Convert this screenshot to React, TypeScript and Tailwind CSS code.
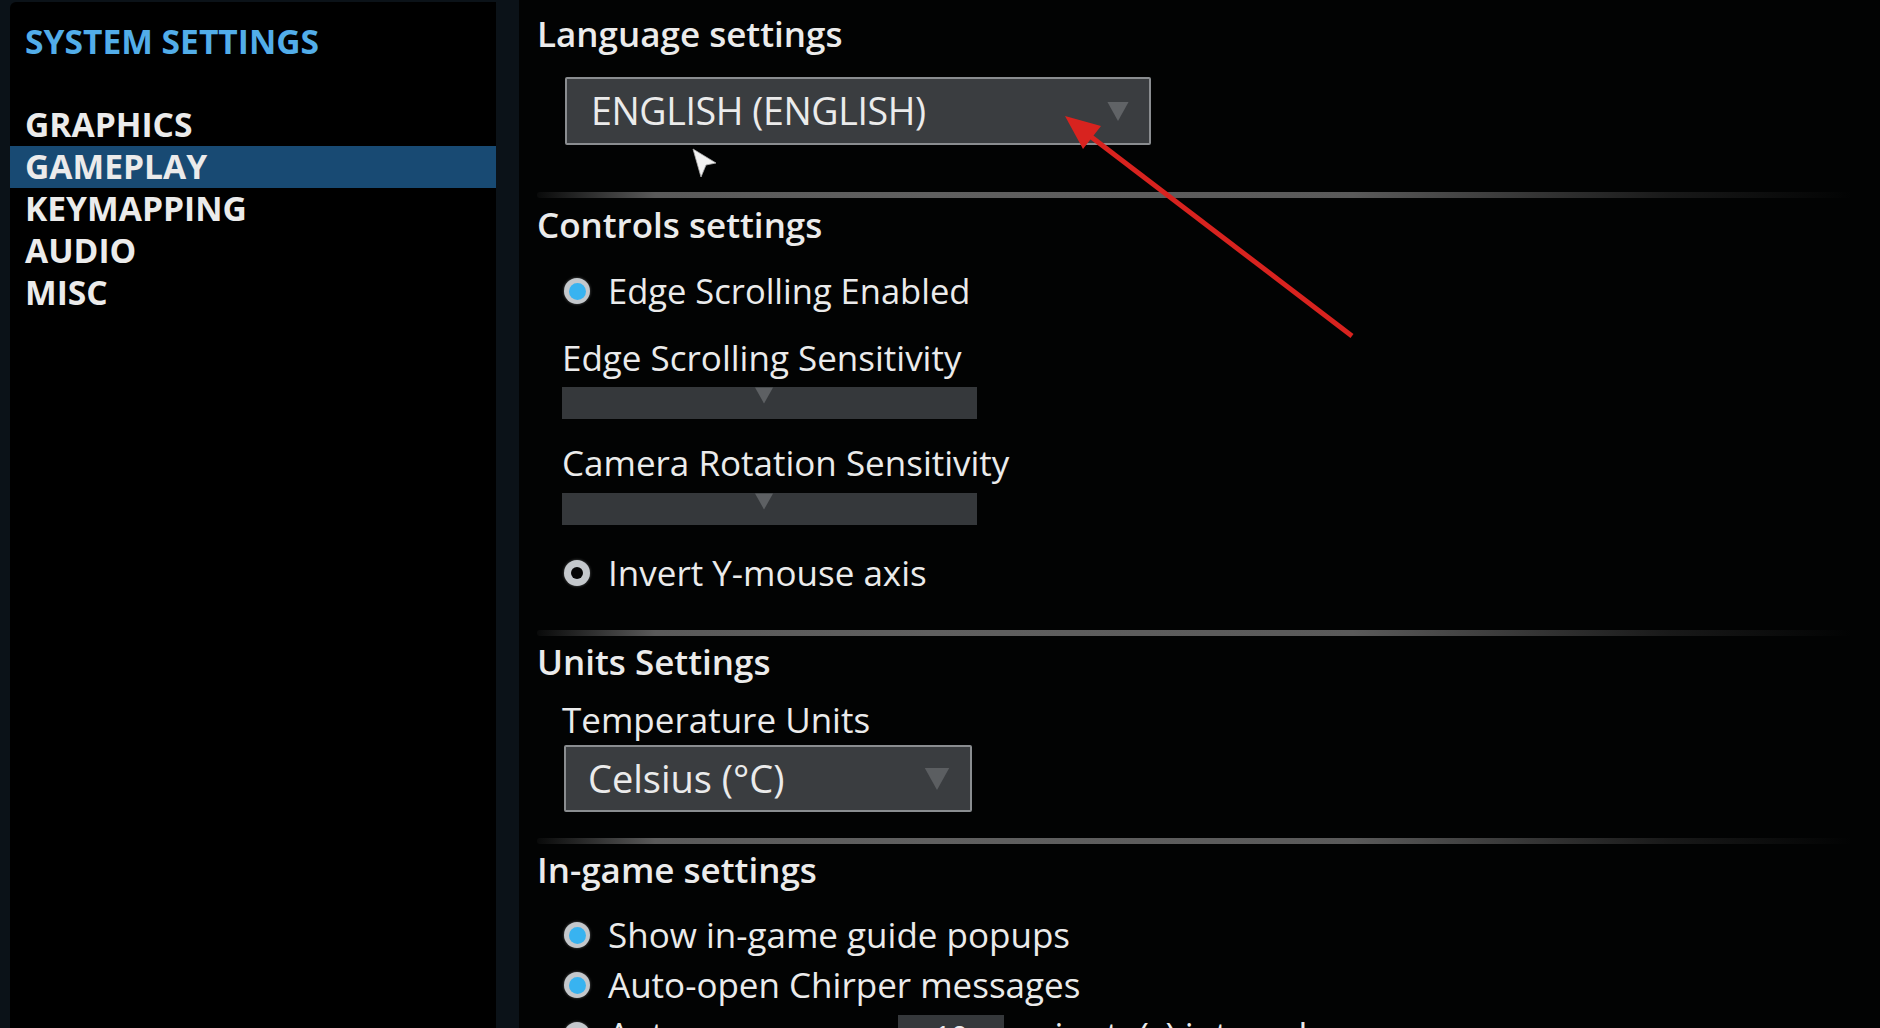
import React from "react";

const menu = ["GRAPHICS", "GAMEPLAY", "KEYMAPPING", "AUDIO", "MISC"];

function Radio({ checked }: { checked: boolean }) {
  return (
    <span className="flex h-[26px] w-[26px] shrink-0 items-center justify-center rounded-full bg-[#c4c8cc] shadow-[0_0_3px_rgba(255,255,255,0.35)]">
      {checked ? (
        <span className="h-[17px] w-[17px] rounded-full bg-[#38b3f0]" />
      ) : (
        <span className="h-[12px] w-[12px] rounded-full bg-[#050505]" />
      )}
    </span>
  );
}

function Caret({ w, h, color }: { w: number; h: number; color: string }) {
  return (
    <svg width={w} height={h} viewBox="0 0 20 18">
      <polygon points="0,0 20,0 10,18" fill={color} />
    </svg>
  );
}

function Separator({ className }: { className: string }) {
  return (
    <div
      className={`h-[6px] mr-[28px] rounded-full bg-[linear-gradient(90deg,rgba(70,70,70,0.1)_0%,#5a5a5a_9%,#606060_30%,#5a5a5a_62%,rgba(40,40,40,0.6)_86%,transparent_100%)] ${className}`}
    />
  );
}

function Slider() {
  return (
    <div className="flex h-[32px] w-[415px] items-start bg-[#35383b] pl-[193px]">
      <Caret w={18} h={17} color="#5d6063" />
    </div>
  );
}

export default function App() {
  return (
    <div className="relative flex h-screen w-full overflow-hidden bg-[#0b1218] font-['Open_Sans','Noto_Sans',sans-serif] text-[#ebebeb]">
      {/* Sidebar */}
      <aside className="ml-[10px] mt-[2px] w-[486px] shrink-0 rounded-tl-[6px] bg-black pt-[19px]">
        <h1 className="flex h-[40px] items-center pl-[15px] text-[33.6px] font-bold text-[#52ade9]">
          SYSTEM SETTINGS
        </h1>
        <ul className="mt-[43px]">
          {menu.map((m) => (
            <li
              key={m}
              className={`flex h-[42px] items-center pl-[15px] text-[33.6px] font-bold leading-none ${
                m === "GAMEPLAY" ? "bg-[#184a73]" : ""
              }`}
            >
              {m}
            </li>
          ))}
        </ul>
      </aside>

      {/* Main */}
      <main className="ml-[23px] flex-1 bg-[#020303] pl-[18px]">
        <h2 className="flex h-[68px] items-center text-[35px] font-semibold">Language settings</h2>
        <div className="ml-[28px] mt-[9px] flex h-[68px] w-[586px] items-center justify-between rounded-[2px] border-2 border-[#8a8d90] bg-[#3a3d40] pl-[24px] pr-[20px]">
          <span className="text-[37.5px] tracking-[-0.01em]">ENGLISH (ENGLISH)</span>
          <Caret w={22} h={19} color="#606366" />
        </div>

        <Separator className="mt-[47px]" />
        <h2 className="flex h-[54px] items-center text-[35px] font-semibold">Controls settings</h2>

        <div className="ml-[27px] flex h-[78px] items-center gap-[18px]">
          <Radio checked />
          <span className="text-[34.5px]">Edge Scrolling Enabled</span>
        </div>
        <div className="ml-[25px] mt-[2px] flex h-[52px] items-center text-[35px]">Edge Scrolling Sensitivity</div>
        <div className="ml-[25px] mt-[3px]">
          <Slider />
        </div>
        <div className="ml-[25px] mt-[14px] flex h-[60px] items-center text-[35px]">
          Camera Rotation Sensitivity
        </div>
        <div className="ml-[25px]">
          <Slider />
        </div>
        <div className="ml-[27px] flex h-[96px] items-center gap-[18px]">
          <Radio checked={false} />
          <span className="text-[35px]">Invert Y-mouse axis</span>
        </div>

        <Separator className="mt-[9px]" />
        <h2 className="flex h-[52px] items-center text-[35px] font-semibold">Units Settings</h2>
        <div className="ml-[25px] mt-[7px] flex h-[50px] items-center text-[35px]">Temperature Units</div>
        <div className="ml-[27px] flex h-[67px] w-[408px] items-center justify-between rounded-[2px] border-2 border-[#8a8d90] bg-[#3a3d40] pl-[22px] pr-[20px]">
          <span className="text-[38px]">Celsius (°C)</span>
          <Caret w={26} h={22} color="#5b5e61" />
        </div>

        <Separator className="mt-[26px]" />
        <h2 className="flex h-[52px] items-center text-[35px] font-semibold">In-game settings</h2>

        <div className="ml-[27px] mt-[14px] flex h-[50px] items-center gap-[18px]">
          <Radio checked />
          <span className="text-[35px]">Show in-game guide popups</span>
        </div>
        <div className="ml-[27px] flex h-[50px] items-center gap-[18px]">
          <Radio checked />
          <span className="text-[35px]">Auto-open Chirper messages</span>
        </div>
        <div className="ml-[27px] flex h-[50px] items-center gap-[18px]">
          <Radio checked={false} />
          <span className="text-[35px]">Autosave every</span>
          <span className="ml-[24px] flex h-[40px] w-[106px] items-center justify-center bg-[#35383b] text-[30px]">
            10
          </span>
          <span className="text-[35px]">minute(s) interval</span>
        </div>
      </main>

      {/* Mouse cursor + annotation arrow */}
      <svg
        className="pointer-events-none absolute left-0 top-0"
        width={1880}
        height={1028}
        viewBox="0 0 1880 1028"
      >
        <polygon points="693,149 716,163 706,165 701,177" fill="#f2f2f2" stroke="#b0b0b0" strokeWidth="0.8" />
        <line x1="1352" y1="336" x2="1090" y2="136" stroke="#d8231f" strokeWidth="5" />
        <polygon points="1065,116 1101,126 1083,149" fill="#d8231f" />
      </svg>
    </div>
  );
}
